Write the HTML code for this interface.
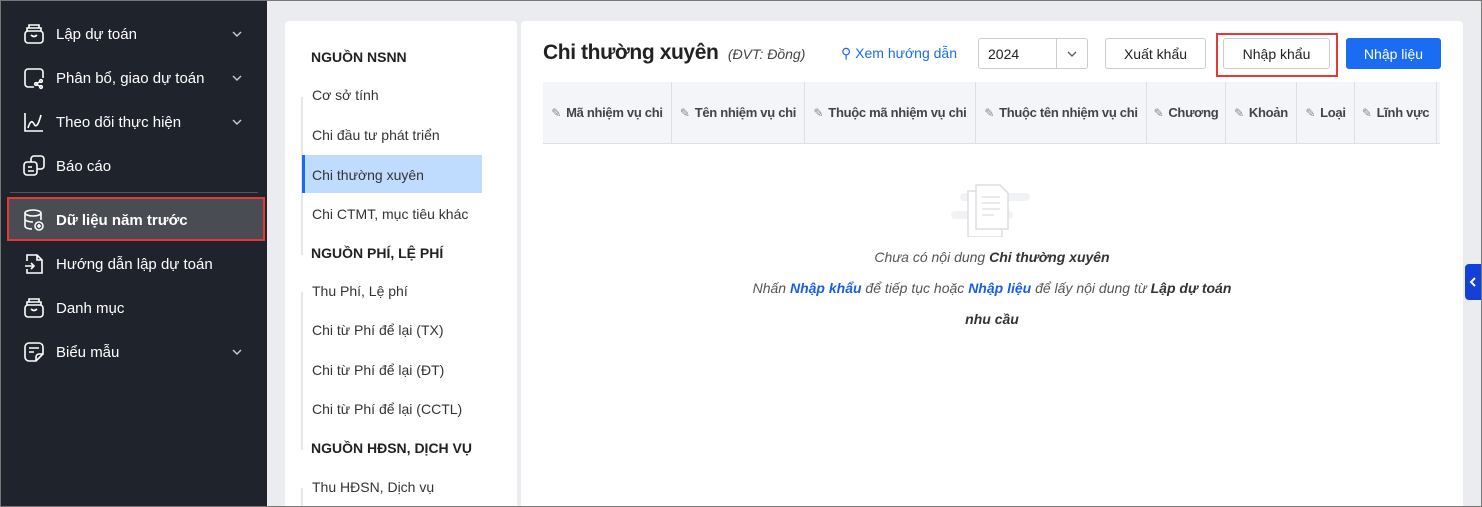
<!DOCTYPE html>
<html><head><meta charset="utf-8"><style>
*{box-sizing:border-box;margin:0;padding:0}
html,body{width:1482px;height:507px;overflow:hidden;background:#ebecf0}
body{font-family:"Liberation Sans",sans-serif}
#w{position:absolute;left:0;top:0;width:1482px;height:507px;overflow:hidden;background:#ebecf0}
#bd{position:absolute;left:0;top:0;width:1482px;height:507px;border:1px solid #777;pointer-events:none;z-index:9}
.sb{position:absolute;left:0;top:0;width:267px;height:507px;background:#1f232b;color:#fff}
.it{position:absolute;left:22px;height:24px;display:flex;align-items:center;font-size:15px;width:225px}
.it svg{width:24px;height:24px;margin-right:10px;flex:none}
.it .ch{position:absolute;right:4px;top:6px;width:12px;height:12px;margin:0}
.lp{position:absolute;left:285px;top:21px;width:232px;height:490px;background:#fff;border-radius:4px}
.h{position:absolute;left:26px;font-weight:bold;font-size:14px;color:#222}
.ln{position:absolute;left:16px;width:2px;background:#e6e7eb}
.li{position:absolute;left:27px;font-size:14px;color:#333}
.rp{position:absolute;left:521px;top:21px;width:942px;height:490px;background:#fff;border-radius:4px}
.btn{position:absolute;height:31px;border:1px solid #c9ccd3;border-radius:3px;font-size:14px;display:flex;align-items:center;justify-content:center;color:#222;background:#fff}
.th{position:absolute;top:82px;height:62px;background:#f4f5f9;border-bottom:1px solid #dcdfe5;left:543px;width:897px}
.th div{position:absolute;top:0;height:61px;border-right:1px solid #dcdfe5;font-size:13px;font-weight:bold;color:#444;display:flex;align-items:center;justify-content:center;white-space:nowrap;letter-spacing:-0.3px}
.th span{color:#888;font-weight:normal;margin-right:5px;font-size:12px}
.m{position:absolute;left:0;width:942px;text-align:center;font-style:italic;font-size:14px;color:#555}
.m b{color:#333}.m a{color:#1a5ee8;font-weight:bold;text-decoration:none}
</style></head><body><div id="w">
<div class="sb">
 <div class="it" style="top:22px"><svg viewBox="0 0 24 24" fill="none" stroke="#fff" stroke-width="1.6"><rect x="3" y="9" width="18" height="12" rx="3"/><path d="M5 9V6h14v3M7 6V3h10v3M9 13q3 3 6 0"/></svg>Lập dự toán<svg class="ch" viewBox="0 0 12 12" fill="none" stroke="#ccc" stroke-width="1.4"><path d="M2 4l4 4 4-4"/></svg></div>
 <div class="it" style="top:66px"><svg viewBox="0 0 24 24" fill="none" stroke="#fff" stroke-width="1.6"><path d="M12 3H6a3 3 0 00-3 3v12a3 3 0 003 3h6M12 3h6a3 3 0 013 3v6"/><circle cx="14" cy="18" r="1.3"/><circle cx="19" cy="15" r="1.3"/><circle cx="19" cy="21" r="1.3"/><path d="M15 17.5l3-2M15 18.5l3 2"/></svg>Phân bổ, giao dự toán<svg class="ch" viewBox="0 0 12 12" fill="none" stroke="#ccc" stroke-width="1.4"><path d="M2 4l4 4 4-4"/></svg></div>
 <div class="it" style="top:110px"><svg viewBox="0 0 24 24" fill="none" stroke="#fff" stroke-width="1.6"><path d="M3 3v18h18M6 18q3-10 6-4t7-9"/></svg>Theo dõi thực hiện<svg class="ch" viewBox="0 0 12 12" fill="none" stroke="#ccc" stroke-width="1.4"><path d="M2 4l4 4 4-4"/></svg></div>
 <div class="it" style="top:154px"><svg viewBox="0 0 24 24" fill="none" stroke="#fff" stroke-width="1.6"><rect x="2" y="8" width="13" height="13" rx="3"/><path d="M9 8V5a3 3 0 013-3h7a3 3 0 013 3v7a3 3 0 01-3 3h-4M6 13h4M6 17h6"/></svg>Báo cáo</div>
 <div style="position:absolute;left:10px;top:192px;width:248px;height:1px;background:#555"></div>
 <div style="position:absolute;left:7px;top:197px;width:258px;height:44px;background:#4a4c54;border:2px solid #e53935"></div>
 <div class="it" style="top:208px;font-weight:bold"><svg viewBox="0 0 24 24" fill="none" stroke="#fff" stroke-width="1.6"><ellipse cx="11" cy="5" rx="8" ry="3"/><path d="M3 5v13c0 1.7 3 3 7 3M19 5v7M3 11c0 1.7 3.5 3 8 3"/><circle cx="17" cy="18" r="4"/><path d="M17 16v4M15 18h4"/></svg>Dữ liệu năm trước</div>
 <div class="it" style="top:252px"><svg viewBox="0 0 24 24" fill="none" stroke="#fff" stroke-width="1.6"><path d="M5 9V3h10l5 5v13H5v-4M15 3v5h5M3 14h9M9 11l3 3-3 3"/></svg>Hướng dẫn lập dự toán</div>
 <div class="it" style="top:296px"><svg viewBox="0 0 24 24" fill="none" stroke="#fff" stroke-width="1.6"><rect x="3" y="9" width="18" height="12" rx="3"/><path d="M5 9V6h14v3M7 6V3h10v3M9 13q3 3 6 0"/></svg>Danh mục</div>
 <div class="it" style="top:340px"><svg viewBox="0 0 24 24" fill="none" stroke="#fff" stroke-width="1.6"><path d="M14 21H7a4 4 0 01-4-4V7a4 4 0 014-4h10a4 4 0 014 4v7zM14 21v-4a3 3 0 013-3h4M7 8h10M7 12h5"/></svg>Biểu mẫu<svg class="ch" viewBox="0 0 12 12" fill="none" stroke="#ccc" stroke-width="1.4"><path d="M2 4l4 4 4-4"/></svg></div>
</div>
<div class="lp">
 <div class="h" style="top:28px">NGUỒN NSNN</div>
 <div class="ln" style="top:76px;height:158px"></div>
 <div class="li" style="top:66px">Cơ sở tính</div>
 <div class="li" style="top:106px">Chi đầu tư phát triển</div>
 <div style="position:absolute;left:17px;top:134px;width:180px;height:38px;background:#bfdbfe;border-left:3px solid #1a6cf2"></div>
 <div class="li" style="top:146px">Chi thường xuyên</div>
 <div class="li" style="top:185px">Chi CTMT, mục tiêu khác</div>
 <div class="h" style="top:224px">NGUỒN PHÍ, LỆ PHÍ</div>
 <div class="ln" style="top:271px;height:158px"></div>
 <div class="li" style="top:262px">Thu Phí, Lệ phí</div>
 <div class="li" style="top:301px">Chi từ Phí để lại (TX)</div>
 <div class="li" style="top:341px">Chi từ Phí để lại (ĐT)</div>
 <div class="li" style="top:380px">Chi từ Phí để lại (CCTL)</div>
 <div class="h" style="top:419px">NGUỒN HĐSN, DỊCH VỤ</div>
 <div class="ln" style="top:467px;height:30px"></div>
 <div class="li" style="top:458px">Thu HĐSN, Dịch vụ</div>
</div>
<div class="rp">
 <div style="position:absolute;left:22px;top:20px;font-size:21px;font-weight:bold;color:#222;letter-spacing:-0.4px">Chi thường xuyên <span style="font-size:14px;font-weight:normal;font-style:italic;color:#444;margin-left:4px;letter-spacing:0">(ĐVT: Đồng)</span></div>
 <div style="position:absolute;left:320px;top:24px;font-size:14px;color:#1a6cf2">⚲ Xem hướng dẫn</div>
 <div class="btn" style="left:457px;top:17px;width:110px;justify-content:flex-start;padding-left:9px">2024<div style="position:absolute;left:77px;top:0;width:1px;height:29px;background:#c9ccd3"></div><svg style="position:absolute;right:9px;top:10px" width="12" height="10" viewBox="0 0 12 10" fill="none" stroke="#555" stroke-width="1.3"><path d="M2 3l4 4 4-4"/></svg></div>
 <div class="btn" style="left:584px;top:17px;width:101px">Xuất khẩu</div>
 <div style="position:absolute;left:695px;top:12px;width:122px;height:44px;border:2px solid #e53935"></div>
 <div class="btn" style="left:702px;top:17px;width:107px">Nhập khẩu</div>
 <div class="btn" style="left:825px;top:17px;width:95px;background:#1a6cf2;border-color:#1a6cf2;color:#fff">Nhập liệu</div>
 <svg style="position:absolute;left:425px;top:160px" width="90" height="56" viewBox="0 0 90 56"><rect x="14" y="12" width="70" height="8" rx="4" fill="#f1f2f5"/><rect x="5" y="30" width="62" height="8" rx="4" fill="#f1f2f5"/><path d="M26 6h26l8 8v38H26z" fill="#fff" stroke="#dcdde2" stroke-width="1.5" transform="translate(-4 4)"/><path d="M30 4h24l8 8v36H30z" fill="#fff" stroke="#dcdde2" stroke-width="1.5"/><path d="M36 16h18M36 22h18M36 28h18M36 34h12" stroke="#e2e3e7" stroke-width="1.5"/></svg>
 <div class="m" style="top:228px">Chưa có nội dung <b>Chi thường xuyên</b></div>
 <div class="m" style="top:259px">Nhấn <a>Nhập khẩu</a> để tiếp tục hoặc <a>Nhập liệu</a> để lấy nội dung từ <b>Lập dự toán</b></div>
 <div class="m" style="top:290px"><b>nhu cầu</b></div>
</div>
<div class="th">
 <div style="left:0;width:129px"><span>✎</span>Mã nhiệm vụ chi</div>
 <div style="left:129px;width:133px"><span>✎</span>Tên nhiệm vụ chi</div>
 <div style="left:262px;width:171px"><span>✎</span>Thuộc mã nhiệm vụ chi</div>
 <div style="left:433px;width:171px"><span>✎</span>Thuộc tên nhiệm vụ chi</div>
 <div style="left:604px;width:79px"><span>✎</span>Chương</div>
 <div style="left:683px;width:71px"><span>✎</span>Khoản</div>
 <div style="left:754px;width:58px"><span>✎</span>Loại</div>
 <div style="left:812px;width:82px"><span>✎</span>Lĩnh vực</div>
</div>
<div style="position:absolute;left:1465px;top:264px;width:17px;height:36px;background:#1340d6;border-radius:4px 0 0 4px"><svg width="17" height="36" viewBox="0 0 17 36" fill="none" stroke="#fff" stroke-width="2"><path d="M10 14l-4 4 4 4"/></svg></div>
<div id="bd"></div>
</div></body></html>
